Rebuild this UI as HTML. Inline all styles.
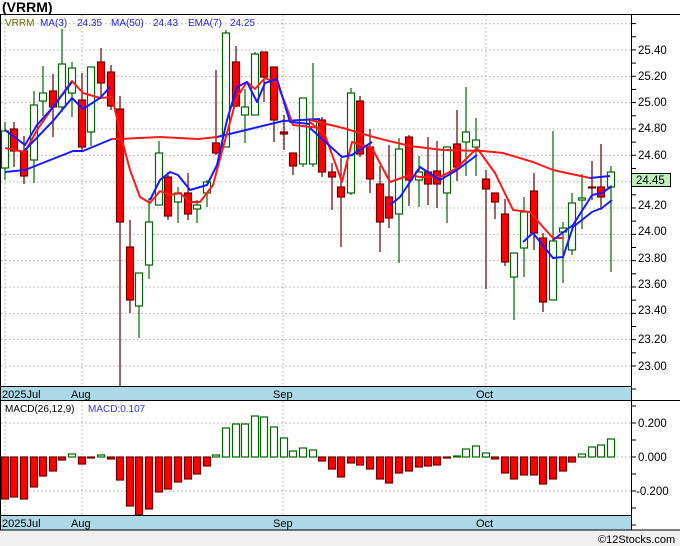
<!DOCTYPE html>
<html><head><meta charset="utf-8"><style>
html,body{margin:0;padding:0;background:#fff;}
body{width:680px;height:546px;position:relative;overflow:hidden;font-family:"Liberation Sans",sans-serif;}
svg{position:absolute;left:0;top:0;}
</style></head><body>
<svg id="s" width="680" height="546" viewBox="0 0 680 546" xmlns="http://www.w3.org/2000/svg" font-family="Liberation Sans, sans-serif">
<rect x="0" y="0" width="680" height="546" fill="#fff"/>
<rect x="0" y="530" width="680" height="16" fill="#f0f0f0"/>
<g id="grid"></g>
<g id="macd"></g>
<g id="cand"></g>
<g id="lines" fill="none" stroke-width="2" stroke-linejoin="round"></g>
<!-- strips -->
<rect x="1" y="387" width="630" height="13" fill="#add8e6"/>
<rect x="1" y="516" width="630" height="14" fill="#add8e6"/>
<line x1="1" y1="386.5" x2="631" y2="386.5" stroke="#000"/>
<line x1="0" y1="400.5" x2="680" y2="400.5" stroke="#000"/>
<line x1="1" y1="515.5" x2="631" y2="515.5" stroke="#000"/>
<line x1="0" y1="530" x2="680" y2="530" stroke="#000"/>
<line x1="0" y1="14.5" x2="680" y2="14.5" stroke="#000"/>
<line x1="0.5" y1="14" x2="0.5" y2="530" stroke="#000"/>
<line x1="631.5" y1="14" x2="631.5" y2="530" stroke="#000"/>
<g id="ticks" stroke="#000"></g>
<text x="2" y="12" font-size="14" font-weight="bold" fill="#000">(VRRM)</text>
<text x="5" y="26" font-size="10" fill="#666600">VRRM</text>
<text x="40" y="26" font-size="10" fill="#2222ee">MA(3)</text>
<text x="77" y="26" font-size="10" fill="#2222ee">24.35</text>
<text x="111" y="26" font-size="10" fill="#2222ee">MA(50)</text>
<text x="153" y="26" font-size="10" fill="#2222ee">24.43</text>
<text x="188" y="26" font-size="10" fill="#2222ee">EMA(7)</text>
<text x="230" y="26" font-size="10" fill="#2222ee">24.25</text>
<text x="5" y="412" font-size="10" fill="#000">MACD(26,12,9)</text>
<text x="88" y="412" font-size="10" fill="#3333ee">MACD:0.107</text>
<g font-size="11" fill="#000">
<text x="2" y="398">2025Jul</text><text x="71" y="398">Aug</text><text x="273" y="398">Sep</text><text x="476" y="398">Oct</text>
<text x="2" y="527">2025Jul</text><text x="71" y="527">Aug</text><text x="273" y="527">Sep</text><text x="476" y="527">Oct</text>
</g>
<g font-size="11.5" fill="#000">
<text x="638" y="54">25.40</text><text x="638" y="80">25.20</text><text x="638" y="106">25.00</text>
<text x="638" y="132">24.80</text><text x="638" y="159">24.60</text><text x="638" y="209">24.20</text>
<text x="638" y="235">24.00</text><text x="638" y="262">23.80</text><text x="638" y="288">23.60</text>
<text x="638" y="314">23.40</text><text x="638" y="343">23.20</text><text x="638" y="370">23.00</text>
<text x="638" y="427">0.200</text><text x="638" y="461">0.000</text><text x="636" y="495">-0.200</text>
</g>
<rect x="631.5" y="173.5" width="39" height="13" fill="#c0f0c0" stroke="#000"/>
<text x="636" y="184" font-size="11.5" fill="#000">24.45</text>
<text x="598" y="543" font-size="11" fill="#000">©12Stocks.com</text>
</svg>
<script>
var NS="http://www.w3.org/2000/svg";
function el(p,t,a){var e=document.createElementNS(NS,t);for(var k in a)e.setAttribute(k,a[k]);document.getElementById(p).appendChild(e);return e;}
// grid
for(var k=0;k<=13;k++){var y=366-k*26.33;if(y<18)break;el("grid","line",{x1:1,x2:631,y1:y,y2:y,stroke:"#aaa","stroke-dasharray":"1.5,2.5"});}
[423,457,491].forEach(function(y){el("grid","line",{x1:1,x2:631,y1:y,y2:y,stroke:"#aaa","stroke-dasharray":"1.5,2.5"});});
[5,82,283,486].forEach(function(x){el("grid","line",{x1:x,x2:x,y1:15,y2:386,stroke:"#aaa","stroke-dasharray":"1.5,2.5"});el("grid","line",{x1:x,x2:x,y1:401,y2:515,stroke:"#aaa","stroke-dasharray":"1.5,2.5"});});
for(var k=0;k<=26;k++){var y=366-k*13.17;if(y<18)break;el("ticks","line",{x1:631,x2:636,y1:y,y2:y});}
for(var k=-4;k<=4;k++){var y=457-k*17;el("ticks","line",{x1:631,x2:636,y1:y,y2:y});}
// candles: x, color, bodyTop, bodyBot, high, low
var C=[[5,'g',131,168,122,180],[14,'r',129,151,122,167],[24,'r',151,176,136,184],[34,'g',105,160,91,183],[43,'g',93,101,66,116],[53,'r',91,107,74,137],[62,'g',64,107,29,112],[72,'g',68,93,62,117],[82,'r',100,147,73,152],[91,'g',67,132,67,146],[101,'r',62,83,48,98],[111,'r',72,106,65,110],[120,'r',109,222,96,387],[130,'r',247,300,220,313],[139,'g',273,306,273,338],[149,'g',222,265,198,279],[159,'g',153,205,141,205],[168,'r',177,216,172,220],[178,'g',193,202,187,223],[188,'r',193,214,173,220],[197,'g',205,209,200,223],[207,'g',182,193,180,207],[216,'r',143,153,70,155],[226,'g',33,147,30,147],[236,'r',62,106,46,107],[245,'g',107,115,89,143],[255,'g',54,115,52,115],[264,'r',52,77,52,102],[274,'r',67,120,67,142],[284,'r',132,134,115,150],[293,'r',153,166,153,175],[303,'g',98,164,98,167],[313,'g',119,164,63,167],[322,'r',120,172,117,177],[332,'r',172,177,163,210],[341,'r',187,197,158,247],[351,'g',93,193,88,195],[360,'r',101,154,96,157],[370,'r',147,179,129,193],[380,'r',184,222,166,252],[389,'r',197,218,145,228],[399,'g',149,214,138,263],[409,'r',137,180,135,206],[419,'g',172,180,156,207],[428,'r',172,184,137,205],[437,'r',171,184,141,208],[447,'g',147,193,147,223],[457,'r',144,167,110,181],[466,'g',132,142,87,176],[476,'g',140,147,118,176],[486,'r',179,189,170,289],[495,'r',193,202,193,219],[505,'r',214,262,199,266],[514,'g',253,277,253,320],[524,'g',212,248,197,277],[534,'r',191,233,173,250],[543,'r',238,302,233,312],[553,'g',241,300,131,300],[563,'g',228,232,222,283],[572,'g',203,250,193,255],[582,'g',198,200,174,229],[592,'r',187,188,161,200],[601,'r',187,197,144,210],[611,'g',172,187,166,272]];
C.forEach(function(c){var g=c[1]=='g';el("cand","line",{x1:c[0],x2:c[0],y1:c[4],y2:c[5],stroke:g?"#006600":"#600000","stroke-width":1.2});
el("cand","rect",{x:c[0]-3.5,y:c[2],width:7,height:Math.max(1,c[3]-c[2]),fill:g?"#fff":"#ff0000",stroke:g?"#006600":"#700000","stroke-width":1.2});});
// MACD
var M=[-42,-40,-42,-30,-19,-14,-3,3,-7,-0.5,2,-2,-23,-49,-58,-52,-35,-32,-25,-22,-17,-9,2,29,33,33,41,40,30,19,6,9,7,-4,-12,-20,-6,-8,-12,-22,-26,-16,-14,-10,-9,-8,-1,1,8,11,4,-2,-16,-22,-18,-18,-27,-22,-14,-5,3,10,12,18];
M.forEach(function(v,i){var x=C[i][0];var pos=v>0;var y=pos?457-v:457;el("macd","rect",{x:x-3.5,y:y,width:7,height:Math.max(1,Math.abs(v)),fill:pos?"#fff":"#ff0000",stroke:pos?"#006600":"#700000","stroke-width":1.2});});
function pl(pts,col){el("lines","polyline",{points:pts,stroke:col});}
pl("5,172 25,170 73,151 83,151 112,139","#1a1aff");
pl("112,139 120,139 160,137 198,139 217,137","#ff1a1a");
pl("217,137 283,121 320,119","#1a1aff");
pl("310,120 343,128 377,138 410,146 443,150 483,151 503,153 533,162 553,170 590,178","#ff1a1a");
pl("590,178 610,176","#1a1aff");
pl("5,148 25,152 37,130 53,107 72,81 83,93 100,98 112,97 122,140 130,170 140,197 150,203 160,191 170,195 180,193 190,202 200,202 213,185 227,133 237,97 247,82 255,89 265,78 277,83 285,103 293,125 320,128","#ff1a1a");
pl("310,122 325,135 342,182 352,142 372,148 390,182 410,175 420,177 440,177 457,168 477,148 495,173 513,210 530,212 543,227 553,238 563,238","#ff1a1a");
pl("5,130 25,145 37,125 53,107 72,82 ","#1a1aff");
pl("25,150 53,121 72,98 83,109 100,98 110,87","#1a1aff");
pl("150,200 160,180 170,172 178,175 190,190 207,185 217,165 227,120 237,87 247,82 257,102 265,83 277,79 290,122 310,124","#1a1aff");
pl("310,128 342,157 352,155 372,142","#1a1aff");
pl("390,205 400,197 420,167 440,180 457,170 477,155","#1a1aff");
pl("523,242 533,233 553,258 563,257 573,227 592,212 602,208 612,200","#1a1aff");
pl("553,240 573,225 592,195 602,193 612,186","#1a1aff");
</script>
</body></html>
